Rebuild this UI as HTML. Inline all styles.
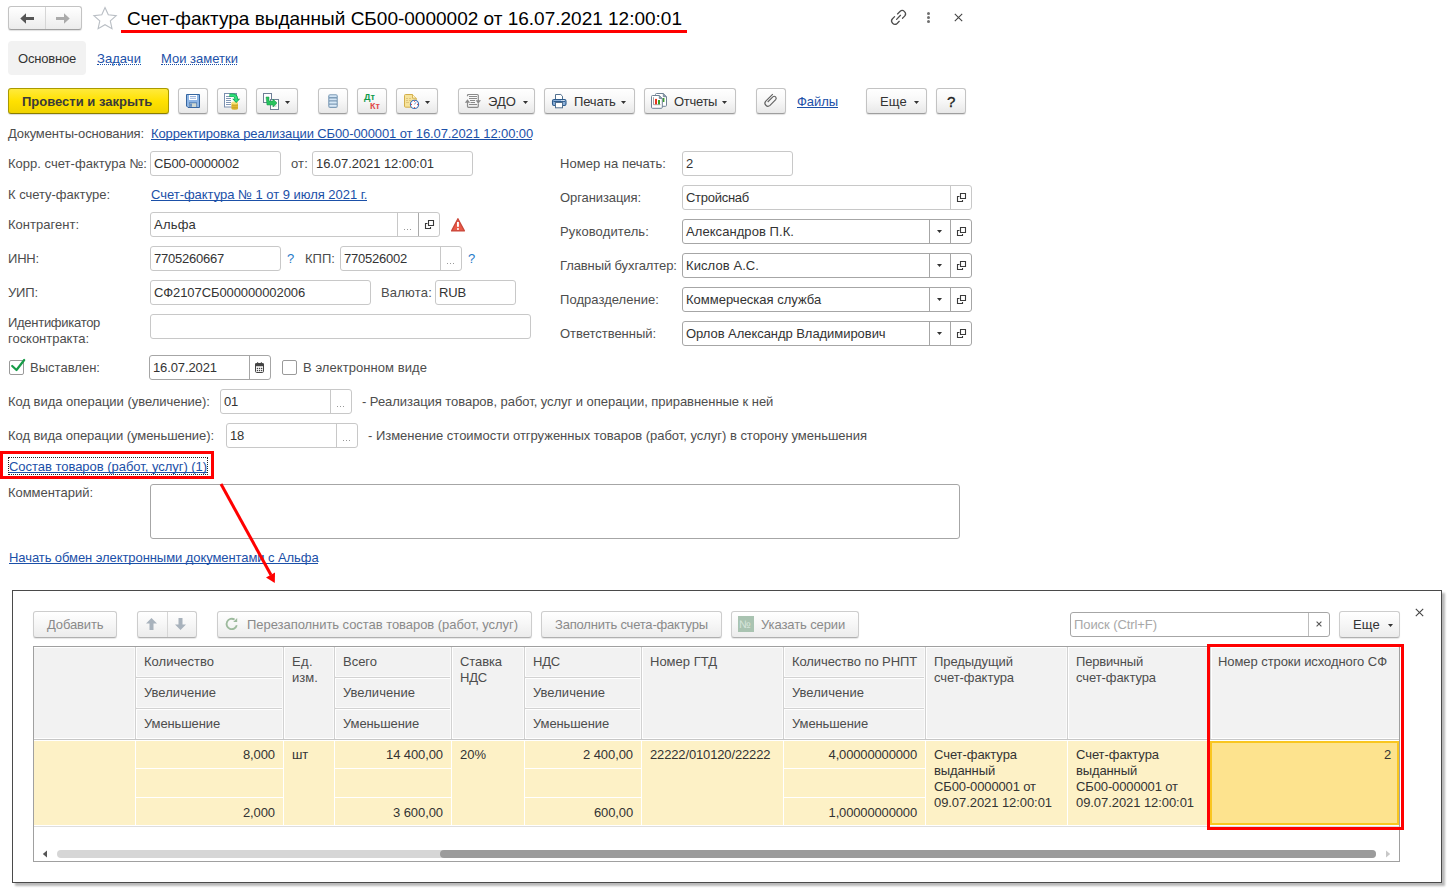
<!DOCTYPE html>
<html><head><meta charset="utf-8"><style>
html,body{margin:0;padding:0;background:#fff;width:1456px;height:892px;overflow:hidden;position:relative}
body{font-family:"Liberation Sans",sans-serif}
.t{position:absolute;white-space:nowrap}
.r{position:absolute}
svg.r{overflow:visible}
</style></head><body>
<div class="r" style="left:8px;top:6px;width:74px;height:24px;border:1px solid #c3c3c3;border-bottom-color:#a0a0a0;border-radius:3px;background:linear-gradient(#fff,#ececec);box-sizing:border-box;box-shadow:0 1px 1px rgba(0,0,0,0.12)"></div>
<div class="r" style="left:45px;top:7px;width:1px;height:22px;background:#d6d6d6"></div>
<svg class="r" style="left:20px;top:13px" width="14" height="11" viewBox="0 0 14 11"><path d="M0.3 5.5L6 0.3V4H14V7H6V10.7z" fill="#555"/></svg>
<svg class="r" style="left:56px;top:13px" width="14" height="11" viewBox="0 0 14 11"><path d="M13.7 5.5L8 0.3V4H0V7H8V10.7z" fill="#aaa"/></svg>
<svg class="r" style="left:92px;top:6px" width="26" height="25" viewBox="0 0 26 25"><path d="M13 1.5l3.3 7.3 7.9.8-5.9 5.3 1.7 7.8L13 18.7l-6.9 4 1.7-7.8-5.9-5.3 7.9-.8z" fill="none" stroke="#b9bec4" stroke-width="1.1"/></svg>
<div class="t" style="left:127px;top:8px;font-size:19px;line-height:21px;color:#000;font-weight:normal;">Счет-фактура выданный СБ00-0000002 от 16.07.2021 12:00:01</div>
<div class="r" style="left:121px;top:30px;width:566px;height:3px;background:#ff0000"></div>
<svg class="r" style="left:886px;top:6px" width="24" height="24" viewBox="0 0 24 24"><g fill="none" stroke="#4d4d4d" stroke-width="1.25" stroke-linecap="round"><path d="M11.5 7.95L13.97 5.47A3.3 3.3 0 0 1 18.63 10.13L16.5 12.25"/><path d="M8.6 10.65L6.47 12.77A3.3 3.3 0 0 0 11.13 17.43L13.25 15.3"/><path d="M10.6 13.4L14.5 9.3"/></g></svg>
<div class="r" style="left:927px;top:11.7px;width:3px;height:3px;border-radius:50%;background:#707070"></div>
<div class="r" style="left:927px;top:15.899999999999999px;width:3px;height:3px;border-radius:50%;background:#707070"></div>
<div class="r" style="left:927px;top:20.1px;width:3px;height:3px;border-radius:50%;background:#707070"></div>
<svg class="r" style="left:954px;top:13px" width="9" height="9" viewBox="0 0 9 9"><path d="M0.8 0.8l7.4 7.4M8.2 0.8l-7.4 7.4" stroke="#444" stroke-width="1.1"/></svg>
<div class="r" style="left:8px;top:41px;width:78px;height:34px;background:#f2f2f2;border-radius:4px"></div>
<div class="t" style="left:18px;top:51px;font-size:13px;line-height:15px;color:#333;font-weight:normal;letter-spacing:-0.195px;">Основное</div>
<div class="t" style="left:97px;top:51px;font-size:13px;line-height:15px;color:#1b50a8;font-weight:normal;letter-spacing:0.057px;">Задачи</div>
<div class="r" style="left:97px;top:64px;width:44px;height:1px;border-top:1px dotted #1b50a8"></div>
<div class="t" style="left:161px;top:51px;font-size:13px;line-height:15px;color:#1b50a8;font-weight:normal;letter-spacing:0.009px;">Мои заметки</div>
<div class="r" style="left:161px;top:64px;width:76px;height:1px;border-top:1px dotted #1b50a8"></div>
<div class="r" style="left:8px;top:88px;width:161px;height:26px;border:1px solid #a99a00;border-bottom-color:#8a7d00;border-radius:3px;background:linear-gradient(#ffea3c,#ffe100 50%,#f0d300);box-sizing:border-box;box-shadow:0 1px 1px rgba(0,0,0,0.15)"></div>
<div class="t" style="left:22px;top:94px;font-size:13px;line-height:15px;color:#3a3a3a;font-weight:bold;">Провести и закрыть</div>
<div class="r" style="left:178px;top:88px;width:30px;height:26px;border:1px solid #c3c3c3;border-bottom-color:#9e9e9e;border-radius:3px;background:linear-gradient(#ffffff,#f7f7f7 50%,#e8e8e8);box-sizing:border-box;box-shadow:0 1px 1px rgba(0,0,0,0.12)"></div>
<div class="r" style="left:217px;top:88px;width:30px;height:26px;border:1px solid #c3c3c3;border-bottom-color:#9e9e9e;border-radius:3px;background:linear-gradient(#ffffff,#f7f7f7 50%,#e8e8e8);box-sizing:border-box;box-shadow:0 1px 1px rgba(0,0,0,0.12)"></div>
<div class="r" style="left:256px;top:88px;width:42px;height:26px;border:1px solid #c3c3c3;border-bottom-color:#9e9e9e;border-radius:3px;background:linear-gradient(#ffffff,#f7f7f7 50%,#e8e8e8);box-sizing:border-box;box-shadow:0 1px 1px rgba(0,0,0,0.12)"></div>
<div class="r" style="left:318px;top:88px;width:30px;height:26px;border:1px solid #c3c3c3;border-bottom-color:#9e9e9e;border-radius:3px;background:linear-gradient(#ffffff,#f7f7f7 50%,#e8e8e8);box-sizing:border-box;box-shadow:0 1px 1px rgba(0,0,0,0.12)"></div>
<div class="r" style="left:357px;top:88px;width:30px;height:26px;border:1px solid #c3c3c3;border-bottom-color:#9e9e9e;border-radius:3px;background:linear-gradient(#ffffff,#f7f7f7 50%,#e8e8e8);box-sizing:border-box;box-shadow:0 1px 1px rgba(0,0,0,0.12)"></div>
<div class="r" style="left:396px;top:88px;width:42px;height:26px;border:1px solid #c3c3c3;border-bottom-color:#9e9e9e;border-radius:3px;background:linear-gradient(#ffffff,#f7f7f7 50%,#e8e8e8);box-sizing:border-box;box-shadow:0 1px 1px rgba(0,0,0,0.12)"></div>
<div class="r" style="left:458px;top:88px;width:77px;height:26px;border:1px solid #c3c3c3;border-bottom-color:#9e9e9e;border-radius:3px;background:linear-gradient(#ffffff,#f7f7f7 50%,#e8e8e8);box-sizing:border-box;box-shadow:0 1px 1px rgba(0,0,0,0.12)"></div>
<div class="r" style="left:544px;top:88px;width:91px;height:26px;border:1px solid #c3c3c3;border-bottom-color:#9e9e9e;border-radius:3px;background:linear-gradient(#ffffff,#f7f7f7 50%,#e8e8e8);box-sizing:border-box;box-shadow:0 1px 1px rgba(0,0,0,0.12)"></div>
<div class="r" style="left:644px;top:88px;width:92px;height:26px;border:1px solid #c3c3c3;border-bottom-color:#9e9e9e;border-radius:3px;background:linear-gradient(#ffffff,#f7f7f7 50%,#e8e8e8);box-sizing:border-box;box-shadow:0 1px 1px rgba(0,0,0,0.12)"></div>
<div class="r" style="left:756px;top:88px;width:30px;height:26px;border:1px solid #c3c3c3;border-bottom-color:#9e9e9e;border-radius:3px;background:linear-gradient(#ffffff,#f7f7f7 50%,#e8e8e8);box-sizing:border-box;box-shadow:0 1px 1px rgba(0,0,0,0.12)"></div>
<div class="r" style="left:866px;top:88px;width:61px;height:26px;border:1px solid #c3c3c3;border-bottom-color:#9e9e9e;border-radius:3px;background:linear-gradient(#ffffff,#f7f7f7 50%,#e8e8e8);box-sizing:border-box;box-shadow:0 1px 1px rgba(0,0,0,0.12)"></div>
<div class="r" style="left:936px;top:88px;width:30px;height:26px;border:1px solid #c3c3c3;border-bottom-color:#9e9e9e;border-radius:3px;background:linear-gradient(#ffffff,#f7f7f7 50%,#e8e8e8);box-sizing:border-box;box-shadow:0 1px 1px rgba(0,0,0,0.12)"></div>
<svg class="r" style="left:186px;top:94px" width="14" height="14" viewBox="0 0 14 14"><path d="M0.5 0.5H13.5V13.5H2L0.5 12z" fill="#8db5e5" stroke="#35659f" stroke-width="1"/><rect x="3" y="1" width="8" height="5" fill="#fff"/><path d="M4 2.5h6M4 4.3h6" stroke="#8aa7d6" stroke-width="0.9"/><rect x="3" y="8.5" width="8" height="5" fill="#3d6aa3"/><rect x="3.6" y="9.2" width="6.8" height="3.8" fill="#cfd8d2"/><rect x="4.2" y="9.6" width="1.6" height="3.2" fill="#4e7fbf"/></svg>
<svg class="r" style="left:223px;top:92px" width="17" height="18" viewBox="0 0 17 18"><rect x="1.5" y="1.5" width="12" height="13.5" fill="#fff" stroke="#7a8fae"/><path d="M3 4.5h5M3 6.5h5M3 8.5h5M3 10.5h5M3 12.5h5" stroke="#8096b5" stroke-width="1"/><rect x="8.5" y="11" width="6.5" height="5.5" fill="#e6c23a"/><ellipse cx="11.75" cy="11" rx="3.25" ry="1.4" fill="#f7e37c"/><ellipse cx="11.75" cy="16.5" rx="3.25" ry="1.2" fill="#d9b02a"/><path d="M8.5 13.3h6.5M8.5 15.2h6.5" stroke="#c49a20" stroke-width="0.7"/><path d="M6.5 3.3H10a3.2 3.2 0 0 1 3.2 3.2V7.5" fill="none" stroke="#0f9a4a" stroke-width="3.6"/><path d="M9.2 6.8H17.2L13.2 11z" fill="#0f9a4a"/><path d="M6.8 3.3H10a3.2 3.2 0 0 1 3.2 3.2V7.8" fill="none" stroke="#2fe07a" stroke-width="2.2"/><path d="M10.6 7.5H15.8L13.2 10z" fill="#2fe07a"/></svg>
<svg class="r" style="left:263px;top:93px" width="17" height="17" viewBox="0 0 17 17"><rect x="0.5" y="0.5" width="8" height="9" fill="#fff" stroke="#6f7f96"/><rect x="7.5" y="6.5" width="8" height="10" fill="#fff" stroke="#6f7f96"/><path d="M9.5 9h4M9.5 11h4M9.5 13h4" stroke="#9aa" stroke-width="0.8"/><path d="M3 4h3v4h4V6l4 4-4 4v-2H4z" fill="#29c35e" stroke="#17934a" stroke-width="0.5"/></svg>
<svg class="r" style="left:285px;top:101px" width="5" height="3" viewBox="0 0 5 3"><path d="M0 0h5l-2.5 3z" fill="#333"/></svg>
<svg class="r" style="left:328px;top:94px" width="10" height="14" viewBox="0 0 10 14"><rect x="0.2" y="0.2" width="9.6" height="13.8" rx="2" fill="#7f9db8"/><rect x="1.3" y="1.2" width="7.4" height="1.9" rx="0.6" fill="#d2e4f4"/><rect x="1.3" y="4.4" width="7.4" height="1.9" rx="0.6" fill="#d2e4f4"/><rect x="1.3" y="7.6" width="7.4" height="1.9" rx="0.6" fill="#d6e8f6"/><rect x="1.3" y="10.8" width="7.4" height="1.9" rx="0.6" fill="#dbeaf7"/></svg>
<div class="t" style="left:364px;top:92px;font-size:9px;line-height:10px;color:#0d9a4a;font-weight:bold">Дт</div>
<div class="t" style="left:370px;top:100.5px;font-size:9px;line-height:10px;color:#e04a4a;font-weight:bold">Кт</div>
<svg class="r" style="left:403px;top:92px" width="18" height="18" viewBox="0 0 18 18"><path d="M1.5 3.5a1 1 0 0 1 1-1H9.5L13.2 6.2V14.2a1 1 0 0 1-1 1H2.5a1 1 0 0 1-1-1z" fill="#f6e39c" stroke="#d2ae4a" stroke-width="1"/><path d="M9.5 2.5V6.2H13.2" fill="#fff6d0" stroke="#d2ae4a" stroke-width="0.9"/><path d="M3 6.5h2M6 6.5h2M3 8.5h2M6 8.5h2M3 10.5h3" stroke="#dcc278" stroke-width="0.9"/><circle cx="11.5" cy="12.4" r="4.1" fill="#fff" stroke="#3b6fb5" stroke-width="1.1"/><path d="M11.5 12.4L13 10.2" stroke="#6f94d0" stroke-width="1"/><circle cx="11.5" cy="9.3" r="0.55" fill="#e53030"/><circle cx="14.6" cy="12.4" r="0.55" fill="#e53030"/><circle cx="11.5" cy="15.5" r="0.55" fill="#e53030"/><circle cx="8.4" cy="12.4" r="0.55" fill="#e53030"/></svg>
<svg class="r" style="left:425px;top:101px" width="5" height="3" viewBox="0 0 5 3"><path d="M0 0h5l-2.5 3z" fill="#333"/></svg>
<svg class="r" style="left:464px;top:93px" width="18" height="16" viewBox="0 0 18 16"><g fill="none" stroke="#8a8a8a" stroke-width="1.2"><path d="M3.5 3.2V2.5a1 1 0 0 1 1-1H13.3a1 1 0 0 1 1 1V8.5"/><path d="M14.3 10.5V13.3a1 1 0 0 1-1 1H4.5a1 1 0 0 1-1-1V8"/><path d="M5 3.5h8M5 5.5h8M6 7.5h5M6.5 9.5h4.5M5 11.5h8"/></g><path d="M0.8 9.8L3.5 6.2L6.2 9.8z" fill="#8a8a8a"/><path d="M11.6 7.2H17L14.3 10.8z" fill="#8a8a8a"/></svg>
<div class="t" style="left:488px;top:94px;font-size:13px;line-height:15px;color:#333;font-weight:normal;letter-spacing:0.062px;">ЭДО</div>
<svg class="r" style="left:523px;top:101px" width="5" height="3" viewBox="0 0 5 3"><path d="M0 0h5l-2.5 3z" fill="#333"/></svg>
<svg class="r" style="left:551px;top:93px" width="16" height="16" viewBox="0 0 16 16"><path d="M4.5 1.5H9.8L11.5 3.2V6.5H4.5z" fill="#fff" stroke="#52708f" stroke-width="1"/><rect x="1.5" y="6.5" width="13.5" height="6" rx="1.6" fill="#8db1da" stroke="#2d5b8c" stroke-width="1.1"/><path d="M2.5 8.5H14" stroke="#2d5b8c" stroke-width="1"/><rect x="10.4" y="7.1" width="1.1" height="1" fill="#fff"/><rect x="12.3" y="7.1" width="1.1" height="1" fill="#fff"/><rect x="4.5" y="9.5" width="7" height="5.3" fill="#fff" stroke="#52708f" stroke-width="1"/></svg>
<div class="t" style="left:574px;top:94px;font-size:13px;line-height:15px;color:#333;font-weight:normal;letter-spacing:-0.17px;">Печать</div>
<svg class="r" style="left:621px;top:101px" width="5" height="3" viewBox="0 0 5 3"><path d="M0 0h5l-2.5 3z" fill="#333"/></svg>
<svg class="r" style="left:650px;top:92px" width="18" height="18" viewBox="0 0 18 18"><path d="M5.5 2.5a1 1 0 0 1 1-1H13.3L16.5 4.7V13.3a1 1 0 0 1-1 1H6.5a1 1 0 0 1-1-1z" fill="#fff" stroke="#6f8294" stroke-width="1"/><path d="M13.3 1.5V4.7H16.5" fill="#8a9aaa" stroke="#6f8294" stroke-width="0.8"/><rect x="12.6" y="6" width="1.8" height="4" fill="#3aa02a"/><path d="M1.5 4.5a1 1 0 0 1 1-1H9.3L12.3 6.5V15.3a1 1 0 0 1-1 1H2.5a1 1 0 0 1-1-1z" fill="#fff" stroke="#6f8294" stroke-width="1"/><path d="M9.3 3.5V6.5H12.3" fill="#8a9aaa" stroke="#6f8294" stroke-width="0.8"/><path d="M3.5 5.2V12.7H10.5" fill="none" stroke="#8c8c8c" stroke-width="0.8"/><rect x="5" y="6.9" width="2" height="5.4" fill="#e8341c"/><rect x="8" y="8" width="2" height="4.3" fill="#3aa02a"/></svg>
<div class="t" style="left:674px;top:94px;font-size:13px;line-height:15px;color:#333;font-weight:normal;letter-spacing:-0.3px;">Отчеты</div>
<svg class="r" style="left:722px;top:101px" width="5" height="3" viewBox="0 0 5 3"><path d="M0 0h5l-2.5 3z" fill="#333"/></svg>
<svg class="r" style="left:762px;top:92px" width="17" height="17" viewBox="0 0 17 17"><path d="M10.8 2.06L3.78 9.08A3 3 0 0 0 8.02 13.32L13.68 7.66A2 2 0 0 0 10.86 4.84L5.7 10.0" fill="none" stroke="#626262" stroke-width="1.15"/></svg>
<div class="t" style="left:797px;top:94px;font-size:13px;line-height:15px;color:#1b50a8;font-weight:normal;letter-spacing:-0.062px;">Файлы</div>
<div class="r" style="left:797px;top:107px;width:41px;height:1px;background:#1b50a8"></div>
<div class="t" style="left:880px;top:94px;font-size:13px;line-height:15px;color:#333;font-weight:normal;letter-spacing:0.177px;">Еще</div>
<svg class="r" style="left:914px;top:101px" width="5" height="3" viewBox="0 0 5 3"><path d="M0 0h5l-2.5 3z" fill="#333"/></svg>
<div class="t" style="left:947px;top:93px;font-size:15px;line-height:17px;color:#222;font-weight:normal;-webkit-text-stroke:0.35px #222;">?</div>
<div class="t" style="left:8px;top:126px;font-size:13px;line-height:15px;color:#4d4d4d;font-weight:normal;letter-spacing:-0.128px;">Документы-основания:</div>
<div class="t" style="left:151px;top:126px;font-size:13px;line-height:15px;color:#1b50a8;font-weight:normal;letter-spacing:-0.11px;">Корректировка реализации СБ00-000001 от 16.07.2021 12:00:00</div>
<div class="r" style="left:151px;top:139px;width:381px;height:1px;background:#1b50a8"></div>
<div class="t" style="left:8px;top:156px;font-size:13px;line-height:15px;color:#4d4d4d;font-weight:normal;letter-spacing:0.021px;">Корр. счет-фактура №:</div>
<div class="r" style="left:150px;top:151px;width:131px;height:25px;border:1px solid #c8c8c8;border-radius:3px;background:#fff;box-sizing:border-box"></div>
<div class="t" style="left:154px;top:156px;font-size:13px;line-height:15px;color:#333;font-weight:normal;letter-spacing:-0.197px;">СБ00-0000002</div>
<div class="t" style="left:291px;top:156px;font-size:13px;line-height:15px;color:#4d4d4d;font-weight:normal;letter-spacing:0.161px;">от:</div>
<div class="r" style="left:312px;top:151px;width:161px;height:25px;border:1px solid #c8c8c8;border-radius:3px;background:#fff;box-sizing:border-box"></div>
<div class="t" style="left:316px;top:156px;font-size:13px;line-height:15px;color:#333;font-weight:normal;letter-spacing:-0.07px;">16.07.2021 12:00:01</div>
<div class="t" style="left:560px;top:156px;font-size:13px;line-height:15px;color:#4d4d4d;font-weight:normal;letter-spacing:0.028px;">Номер на печать:</div>
<div class="r" style="left:682px;top:151px;width:111px;height:25px;border:1px solid #c8c8c8;border-radius:3px;background:#fff;box-sizing:border-box"></div>
<div class="t" style="left:686px;top:156px;font-size:13px;line-height:15px;color:#333;font-weight:normal;">2</div>
<div class="t" style="left:8px;top:187px;font-size:13px;line-height:15px;color:#4d4d4d;font-weight:normal;letter-spacing:-0.021px;">К счету-фактуре:</div>
<div class="t" style="left:151px;top:187px;font-size:13px;line-height:15px;color:#1b50a8;font-weight:normal;letter-spacing:-0.03px;">Счет-фактура № 1 от 9 июля 2021 г.</div>
<div class="r" style="left:151px;top:200px;width:216px;height:1px;background:#1b50a8"></div>
<div class="t" style="left:560px;top:190px;font-size:13px;line-height:15px;color:#4d4d4d;font-weight:normal;letter-spacing:-0.086px;">Организация:</div>
<div class="r" style="left:682px;top:185px;width:290px;height:25px;border:1px solid #c8c8c8;border-radius:3px;background:#fff;box-sizing:border-box"></div>
<div class="r" style="left:950px;top:186px;width:1px;height:23px;background:#c8c8c8"></div>
<div class="t" style="left:686px;top:190px;font-size:13px;line-height:15px;color:#333;font-weight:normal;letter-spacing:-0.271px;">Стройснаб</div>
<svg class="r" style="left:957px;top:192px" width="10" height="11" viewBox="0 0 10 11"><path d="M3.5 1.5h5v5h-5z" fill="none" stroke="#3a3a3a" stroke-width="1.1"/><path d="M2.5 4.5H0.5V9.5H5.5V8" fill="none" stroke="#3a3a3a" stroke-width="1.1"/></svg>
<div class="t" style="left:8px;top:217px;font-size:13px;line-height:15px;color:#4d4d4d;font-weight:normal;letter-spacing:0.016px;">Контрагент:</div>
<div class="r" style="left:150px;top:212px;width:290px;height:25px;border:1px solid #c8c8c8;border-radius:3px;background:#fff;box-sizing:border-box"></div>
<div class="r" style="left:397px;top:213px;width:1px;height:23px;background:#c8c8c8"></div>
<div class="t" style="left:154px;top:217px;font-size:13px;line-height:15px;color:#333;font-weight:normal;letter-spacing:0.209px;">Альфа</div>
<div class="r" style="left:418px;top:213px;width:1px;height:23px;background:#aaaaaa"></div>
<div class="r" style="left:404px;top:229px;width:1px;height:1px;background:#999"></div>
<div class="r" style="left:407px;top:229px;width:1px;height:1px;background:#999"></div>
<div class="r" style="left:410px;top:229px;width:1px;height:1px;background:#999"></div>
<svg class="r" style="left:425px;top:219px" width="10" height="11" viewBox="0 0 10 11"><path d="M3.5 1.5h5v5h-5z" fill="none" stroke="#3a3a3a" stroke-width="1.1"/><path d="M2.5 4.5H0.5V9.5H5.5V8" fill="none" stroke="#3a3a3a" stroke-width="1.1"/></svg>
<svg class="r" style="left:450px;top:217px" width="16" height="16" viewBox="0 0 16 16"><path d="M7.9 1.7L14.4 13.9H1.6z" fill="#ea5a48" stroke="#c9473a" stroke-width="1.3" stroke-linejoin="round"/><rect x="7" y="5" width="1.9" height="4.8" fill="#fff"/><rect x="7" y="11.2" width="1.9" height="1.6" fill="#fff"/></svg>
<div class="t" style="left:560px;top:224px;font-size:13px;line-height:15px;color:#4d4d4d;font-weight:normal;letter-spacing:0.126px;">Руководитель:</div>
<div class="r" style="left:682px;top:219px;width:290px;height:25px;border:1px solid #a6a6a6;border-radius:3px;background:#fff;box-sizing:border-box"></div>
<div class="r" style="left:929px;top:220px;width:1px;height:23px;background:#a6a6a6"></div>
<div class="r" style="left:950px;top:220px;width:1px;height:23px;background:#a6a6a6"></div>
<div class="t" style="left:686px;top:224px;font-size:13px;line-height:15px;color:#333;font-weight:normal;letter-spacing:0.067px;">Александров П.К.</div>
<svg class="r" style="left:937px;top:230px" width="5" height="3" viewBox="0 0 5 3"><path d="M0 0h5l-2.5 3z" fill="#333"/></svg>
<svg class="r" style="left:957px;top:226px" width="10" height="11" viewBox="0 0 10 11"><path d="M3.5 1.5h5v5h-5z" fill="none" stroke="#3a3a3a" stroke-width="1.1"/><path d="M2.5 4.5H0.5V9.5H5.5V8" fill="none" stroke="#3a3a3a" stroke-width="1.1"/></svg>
<div class="t" style="left:8px;top:251px;font-size:13px;line-height:15px;color:#4d4d4d;font-weight:normal;letter-spacing:-0.184px;">ИНН:</div>
<div class="r" style="left:150px;top:246px;width:131px;height:25px;border:1px solid #c8c8c8;border-radius:3px;background:#fff;box-sizing:border-box"></div>
<div class="t" style="left:154px;top:251px;font-size:13px;line-height:15px;color:#333;font-weight:normal;letter-spacing:-0.234px;">7705260667</div>
<div class="t" style="left:287px;top:251px;font-size:13px;line-height:15px;color:#1f7ac8;font-weight:normal;">?</div>
<div class="t" style="left:305px;top:251px;font-size:13px;line-height:15px;color:#4d4d4d;font-weight:normal;letter-spacing:0.031px;">КПП:</div>
<div class="r" style="left:340px;top:246px;width:122px;height:25px;border:1px solid #c8c8c8;border-radius:3px;background:#fff;box-sizing:border-box"></div>
<div class="r" style="left:440px;top:247px;width:1px;height:23px;background:#c8c8c8"></div>
<div class="t" style="left:344px;top:251px;font-size:13px;line-height:15px;color:#333;font-weight:normal;letter-spacing:-0.234px;">770526002</div>
<div class="r" style="left:447px;top:263px;width:1px;height:1px;background:#999"></div>
<div class="r" style="left:450px;top:263px;width:1px;height:1px;background:#999"></div>
<div class="r" style="left:453px;top:263px;width:1px;height:1px;background:#999"></div>
<div class="t" style="left:468px;top:251px;font-size:13px;line-height:15px;color:#1f7ac8;font-weight:normal;">?</div>
<div class="t" style="left:560px;top:258px;font-size:13px;line-height:15px;color:#4d4d4d;font-weight:normal;letter-spacing:-0.11px;">Главный бухгалтер:</div>
<div class="r" style="left:682px;top:253px;width:290px;height:25px;border:1px solid #a6a6a6;border-radius:3px;background:#fff;box-sizing:border-box"></div>
<div class="r" style="left:929px;top:254px;width:1px;height:23px;background:#a6a6a6"></div>
<div class="r" style="left:950px;top:254px;width:1px;height:23px;background:#a6a6a6"></div>
<div class="t" style="left:686px;top:258px;font-size:13px;line-height:15px;color:#333;font-weight:normal;letter-spacing:0.082px;">Кислов А.С.</div>
<svg class="r" style="left:937px;top:264px" width="5" height="3" viewBox="0 0 5 3"><path d="M0 0h5l-2.5 3z" fill="#333"/></svg>
<svg class="r" style="left:957px;top:260px" width="10" height="11" viewBox="0 0 10 11"><path d="M3.5 1.5h5v5h-5z" fill="none" stroke="#3a3a3a" stroke-width="1.1"/><path d="M2.5 4.5H0.5V9.5H5.5V8" fill="none" stroke="#3a3a3a" stroke-width="1.1"/></svg>
<div class="t" style="left:8px;top:285px;font-size:13px;line-height:15px;color:#4d4d4d;font-weight:normal;letter-spacing:-0.141px;">УИП:</div>
<div class="r" style="left:150px;top:280px;width:221px;height:25px;border:1px solid #c8c8c8;border-radius:3px;background:#fff;box-sizing:border-box"></div>
<div class="t" style="left:154px;top:285px;font-size:13px;line-height:15px;color:#333;font-weight:normal;letter-spacing:-0.09px;">СФ2107СБ000000002006</div>
<div class="t" style="left:381px;top:285px;font-size:13px;line-height:15px;color:#4d4d4d;font-weight:normal;letter-spacing:0.199px;">Валюта:</div>
<div class="r" style="left:435px;top:280px;width:81px;height:25px;border:1px solid #c8c8c8;border-radius:3px;background:#fff;box-sizing:border-box"></div>
<div class="t" style="left:439px;top:285px;font-size:13px;line-height:15px;color:#333;font-weight:normal;letter-spacing:-0.151px;">RUB</div>
<div class="t" style="left:560px;top:292px;font-size:13px;line-height:15px;color:#4d4d4d;font-weight:normal;letter-spacing:0.047px;">Подразделение:</div>
<div class="r" style="left:682px;top:287px;width:290px;height:25px;border:1px solid #a6a6a6;border-radius:3px;background:#fff;box-sizing:border-box"></div>
<div class="r" style="left:929px;top:288px;width:1px;height:23px;background:#a6a6a6"></div>
<div class="r" style="left:950px;top:288px;width:1px;height:23px;background:#a6a6a6"></div>
<div class="t" style="left:686px;top:292px;font-size:13px;line-height:15px;color:#333;font-weight:normal;">Коммерческая служба</div>
<svg class="r" style="left:937px;top:298px" width="5" height="3" viewBox="0 0 5 3"><path d="M0 0h5l-2.5 3z" fill="#333"/></svg>
<svg class="r" style="left:957px;top:294px" width="10" height="11" viewBox="0 0 10 11"><path d="M3.5 1.5h5v5h-5z" fill="none" stroke="#3a3a3a" stroke-width="1.1"/><path d="M2.5 4.5H0.5V9.5H5.5V8" fill="none" stroke="#3a3a3a" stroke-width="1.1"/></svg>
<div class="t" style="left:8px;top:315px;font-size:13px;line-height:15px;color:#4d4d4d;font-weight:normal;letter-spacing:-0.28px;">Идентификатор</div>
<div class="t" style="left:8px;top:331px;font-size:13px;line-height:15px;color:#4d4d4d;font-weight:normal;letter-spacing:-0.025px;">госконтракта:</div>
<div class="r" style="left:150px;top:314px;width:381px;height:25px;border:1px solid #c8c8c8;border-radius:3px;background:#fff;box-sizing:border-box"></div>
<div class="t" style="left:560px;top:326px;font-size:13px;line-height:15px;color:#4d4d4d;font-weight:normal;letter-spacing:-0.032px;">Ответственный:</div>
<div class="r" style="left:682px;top:321px;width:290px;height:25px;border:1px solid #a6a6a6;border-radius:3px;background:#fff;box-sizing:border-box"></div>
<div class="r" style="left:929px;top:322px;width:1px;height:23px;background:#a6a6a6"></div>
<div class="r" style="left:950px;top:322px;width:1px;height:23px;background:#a6a6a6"></div>
<div class="t" style="left:686px;top:326px;font-size:13px;line-height:15px;color:#333;font-weight:normal;letter-spacing:-0.05px;">Орлов Александр Владимирович</div>
<svg class="r" style="left:937px;top:332px" width="5" height="3" viewBox="0 0 5 3"><path d="M0 0h5l-2.5 3z" fill="#333"/></svg>
<svg class="r" style="left:957px;top:328px" width="10" height="11" viewBox="0 0 10 11"><path d="M3.5 1.5h5v5h-5z" fill="none" stroke="#3a3a3a" stroke-width="1.1"/><path d="M2.5 4.5H0.5V9.5H5.5V8" fill="none" stroke="#3a3a3a" stroke-width="1.1"/></svg>
<div class="r" style="left:9px;top:360px;width:15px;height:15px;border:1px solid #9a9a9a;border-radius:2px;background:#fff;box-sizing:border-box"></div>
<svg class="r" style="left:10px;top:358px" width="16" height="14" viewBox="0 0 16 14"><path d="M2.2 8L6.5 12L14.2 2" fill="none" stroke="#179c48" stroke-width="2.2" stroke-linecap="round" stroke-linejoin="round"/></svg>
<div class="t" style="left:30px;top:360px;font-size:13px;line-height:15px;color:#4d4d4d;font-weight:normal;letter-spacing:0.023px;">Выставлен:</div>
<div class="r" style="left:149px;top:355px;width:122px;height:25px;border:1px solid #a6a6a6;border-radius:3px;background:#fff;box-sizing:border-box"></div>
<div class="r" style="left:249px;top:356px;width:1px;height:23px;background:#a6a6a6"></div>
<div class="t" style="left:153px;top:360px;font-size:13px;line-height:15px;color:#333;font-weight:normal;letter-spacing:-0.109px;">16.07.2021</div>
<svg class="r" style="left:255px;top:362px" width="9" height="11" viewBox="0 0 9 11"><rect x="0.5" y="1.5" width="8" height="9" rx="1.2" fill="#fff" stroke="#444" stroke-width="1"/><rect x="0" y="1.2" width="9" height="3" rx="1" fill="#444"/><rect x="2" y="0.3" width="1.2" height="1.5" fill="#444"/><rect x="5.8" y="0.3" width="1.2" height="1.5" fill="#444"/><rect x="1.8" y="5.8" width="1.3" height="1.3" fill="#444"/><rect x="3.9" y="5.8" width="1.3" height="1.3" fill="#444"/><rect x="6" y="5.8" width="1.3" height="1.3" fill="#444"/><rect x="1.8" y="7.9" width="1.3" height="1.3" fill="#444"/><rect x="3.9" y="7.9" width="1.3" height="1.3" fill="#444"/><rect x="6" y="7.9" width="1.3" height="1.3" fill="#444"/></svg>
<div class="r" style="left:282px;top:360px;width:15px;height:15px;border:1px solid #9a9a9a;border-radius:2px;background:#fff;box-sizing:border-box"></div>
<div class="t" style="left:303px;top:360px;font-size:13px;line-height:15px;color:#4d4d4d;font-weight:normal;letter-spacing:0.066px;">В электронном виде</div>
<div class="t" style="left:8px;top:394px;font-size:13px;line-height:15px;color:#4d4d4d;font-weight:normal;letter-spacing:-0.024px;">Код вида операции (увеличение):</div>
<div class="r" style="left:220px;top:389px;width:132px;height:25px;border:1px solid #c8c8c8;border-radius:3px;background:#fff;box-sizing:border-box"></div>
<div class="r" style="left:330px;top:390px;width:1px;height:23px;background:#c8c8c8"></div>
<div class="t" style="left:224px;top:394px;font-size:13px;line-height:15px;color:#333;font-weight:normal;letter-spacing:-0.234px;">01</div>
<div class="r" style="left:337px;top:406px;width:1px;height:1px;background:#999"></div>
<div class="r" style="left:340px;top:406px;width:1px;height:1px;background:#999"></div>
<div class="r" style="left:343px;top:406px;width:1px;height:1px;background:#999"></div>
<div class="t" style="left:362px;top:394px;font-size:13px;line-height:15px;color:#4d4d4d;font-weight:normal;letter-spacing:-0.045px;">- Реализация товаров, работ, услуг и операции, приравненные к ней</div>
<div class="t" style="left:8px;top:428px;font-size:13px;line-height:15px;color:#4d4d4d;font-weight:normal;letter-spacing:-0.063px;">Код вида операции (уменьшение):</div>
<div class="r" style="left:226px;top:423px;width:132px;height:25px;border:1px solid #c8c8c8;border-radius:3px;background:#fff;box-sizing:border-box"></div>
<div class="r" style="left:336px;top:424px;width:1px;height:23px;background:#c8c8c8"></div>
<div class="t" style="left:230px;top:428px;font-size:13px;line-height:15px;color:#333;font-weight:normal;letter-spacing:-0.234px;">18</div>
<div class="r" style="left:343px;top:440px;width:1px;height:1px;background:#999"></div>
<div class="r" style="left:346px;top:440px;width:1px;height:1px;background:#999"></div>
<div class="r" style="left:349px;top:440px;width:1px;height:1px;background:#999"></div>
<div class="t" style="left:368px;top:428px;font-size:13px;line-height:15px;color:#4d4d4d;font-weight:normal;letter-spacing:-0.02px;">- Изменение стоимости отгруженных товаров (работ, услуг) в сторону уменьшения</div>
<div class="r" style="left:0px;top:451px;width:214px;height:28px;border:3px solid #ff0000;box-sizing:border-box"></div>
<div class="r" style="left:8px;top:457px;width:200px;height:18px;border:1px dotted #222;box-sizing:border-box"></div>
<div class="t" style="left:9px;top:459px;font-size:13px;line-height:15px;color:#1b50a8;font-weight:normal;letter-spacing:-0.03px;">Состав товаров (работ, услуг) (1)</div>
<div class="r" style="left:9px;top:472px;width:198px;height:1px;background:#1b50a8"></div>
<div class="t" style="left:8px;top:485px;font-size:13px;line-height:15px;color:#4d4d4d;font-weight:normal;letter-spacing:-0.043px;">Комментарий:</div>
<div class="r" style="left:150px;top:484px;width:810px;height:55px;border:1px solid #a6a6a6;border-radius:3px;background:#fff;box-sizing:border-box"></div>
<div class="t" style="left:9px;top:550px;font-size:13px;line-height:15px;color:#1b50a8;font-weight:normal;letter-spacing:-0.075px;">Начать обмен электронными документами с Альфа</div>
<div class="r" style="left:9px;top:563px;width:309px;height:1px;background:#1b50a8"></div>
<div class="r" style="left:12px;top:590px;width:1430px;height:293px;border:1px solid #4a4a4a;background:#fff;box-sizing:border-box;box-shadow:3px 3px 2px rgba(0,0,0,0.28)"></div>
<svg class="r" style="left:1415px;top:608px" width="9" height="9" viewBox="0 0 9 9"><path d="M0.8 0.8l7.4 7.4M8.2 0.8l-7.4 7.4" stroke="#444" stroke-width="1.1"/></svg>
<div class="r" style="left:33px;top:611px;width:84px;height:27px;border:1px solid #cdcdcd;border-bottom-color:#b0b0b0;border-radius:3px;background:linear-gradient(#ffffff,#f6f6f6 50%,#ececec);box-sizing:border-box;box-shadow:0 1px 1px rgba(0,0,0,0.10)"></div>
<div class="t" style="left:47px;top:617px;font-size:13px;line-height:15px;color:#8a8a8a;font-weight:normal;letter-spacing:-0.14px;">Добавить</div>
<div class="r" style="left:137px;top:611px;width:60px;height:27px;border:1px solid #cdcdcd;border-bottom-color:#b0b0b0;border-radius:3px;background:linear-gradient(#ffffff,#f6f6f6 50%,#ececec);box-sizing:border-box;box-shadow:0 1px 1px rgba(0,0,0,0.10)"></div>
<div class="r" style="left:167px;top:612px;width:1px;height:25px;background:#d6d6d6"></div>
<svg class="r" style="left:145px;top:617px" width="13" height="14" viewBox="0 0 13 14"><path d="M6.5 1L12 6.5H8.5V13h-4V6.5H1z" fill="#a8b2bc"/></svg>
<svg class="r" style="left:174px;top:617px" width="13" height="14" viewBox="0 0 13 14"><path d="M6.5 13L12 7.5H8.5V1h-4v6.5H1z" fill="#a8b2bc"/></svg>
<div class="r" style="left:217px;top:611px;width:315px;height:27px;border:1px solid #cdcdcd;border-bottom-color:#b0b0b0;border-radius:3px;background:linear-gradient(#ffffff,#f6f6f6 50%,#ececec);box-sizing:border-box;box-shadow:0 1px 1px rgba(0,0,0,0.10)"></div>
<svg class="r" style="left:225px;top:617px" width="14" height="14" viewBox="0 0 14 14"><path d="M11.8 8.35A5.2 5.2 0 1 1 9.6 2.6" fill="none" stroke="#9dba9d" stroke-width="1.8"/><path d="M12.2 1.1V5H8.2z" fill="#9dba9d"/></svg>
<div class="t" style="left:247px;top:617px;font-size:13px;line-height:15px;color:#8a8a8a;font-weight:normal;letter-spacing:-0.05px;">Перезаполнить состав товаров (работ, услуг)</div>
<div class="r" style="left:541px;top:611px;width:181px;height:27px;border:1px solid #cdcdcd;border-bottom-color:#b0b0b0;border-radius:3px;background:linear-gradient(#ffffff,#f6f6f6 50%,#ececec);box-sizing:border-box;box-shadow:0 1px 1px rgba(0,0,0,0.10)"></div>
<div class="t" style="left:555px;top:617px;font-size:13px;line-height:15px;color:#8a8a8a;font-weight:normal;letter-spacing:-0.2px;">Заполнить счета-фактуры</div>
<div class="r" style="left:731px;top:611px;width:128px;height:27px;border:1px solid #cdcdcd;border-bottom-color:#b0b0b0;border-radius:3px;background:linear-gradient(#ffffff,#f6f6f6 50%,#ececec);box-sizing:border-box;box-shadow:0 1px 1px rgba(0,0,0,0.10)"></div>
<div class="r" style="left:738px;top:616px;width:16px;height:16px;background:#a9c3b1"></div>
<div class="t" style="left:739px;top:617px;font-size:11px;line-height:14px;color:#d8e6dc">№</div>
<div class="t" style="left:761px;top:617px;font-size:13px;line-height:15px;color:#8a8a8a;font-weight:normal;letter-spacing:-0.1px;">Указать серии</div>
<div class="r" style="left:1070px;top:612px;width:260px;height:25px;border:1px solid #a6a6a6;border-radius:3px;background:#fff;box-sizing:border-box"></div>
<div class="r" style="left:1308px;top:613px;width:1px;height:23px;background:#bdbdbd"></div>
<div class="t" style="left:1074px;top:617px;font-size:13px;line-height:15px;color:#a8a8a8;font-weight:normal;letter-spacing:-0.075px;">Поиск (Ctrl+F)</div>
<svg class="r" style="left:1316px;top:621px" width="6" height="6" viewBox="0 0 6 6"><path d="M0.6 0.6l4.8 4.8M5.4 0.6l-4.8 4.8" stroke="#555" stroke-width="1.1"/></svg>
<div class="r" style="left:1339px;top:611px;width:61px;height:27px;border:1px solid #cdcdcd;border-bottom-color:#b0b0b0;border-radius:3px;background:linear-gradient(#ffffff,#f6f6f6 50%,#ececec);box-sizing:border-box;box-shadow:0 1px 1px rgba(0,0,0,0.10)"></div>
<div class="t" style="left:1353px;top:617px;font-size:13px;line-height:15px;color:#333;font-weight:normal;letter-spacing:0.177px;">Еще</div>
<svg class="r" style="left:1388px;top:624px" width="5" height="3" viewBox="0 0 5 3"><path d="M0 0h5l-2.5 3z" fill="#333"/></svg>
<div class="r" style="left:33px;top:646px;width:1367px;height:216px;border:1px solid #a0a0a0;background:#fff;box-sizing:border-box"></div>
<div class="r" style="left:34px;top:647px;width:1365px;height:92px;background:#f2f2f2"></div>
<div class="r" style="left:34px;top:738px;width:1365px;height:1px;background:#ffffff"></div>
<div class="r" style="left:34px;top:739px;width:1365px;height:1px;background:#c6c6c6"></div>
<div class="r" style="left:34px;top:740px;width:1365px;height:1px;background:#ffffff"></div>
<div class="r" style="left:34px;top:741px;width:1365px;height:84px;background:#fdf1c6"></div>
<div class="r" style="left:34px;top:825px;width:1365px;height:1px;background:#ffffff"></div>
<div class="r" style="left:34px;top:826px;width:1365px;height:1px;background:#dedede"></div>
<div class="r" style="left:34px;top:647px;width:100px;height:1px;background:#ffffff"></div>
<div class="r" style="left:135px;top:647px;width:1px;height:92px;background:#d2d2d2"></div>
<div class="r" style="left:136px;top:647px;width:1px;height:91px;background:#ffffff"></div>
<div class="r" style="left:134px;top:647px;width:1px;height:91px;background:#fafafa"></div>
<div class="r" style="left:135px;top:741px;width:1px;height:84px;background:#ffffff"></div>
<div class="r" style="left:136px;top:647px;width:146px;height:1px;background:#ffffff"></div>
<div class="r" style="left:136px;top:676px;width:146px;height:1px;background:#fafafa"></div>
<div class="r" style="left:136px;top:677px;width:146px;height:1px;background:#d2d2d2"></div>
<div class="r" style="left:136px;top:678px;width:146px;height:1px;background:#ffffff"></div>
<div class="r" style="left:136px;top:707px;width:146px;height:1px;background:#fafafa"></div>
<div class="r" style="left:136px;top:708px;width:146px;height:1px;background:#d2d2d2"></div>
<div class="r" style="left:136px;top:709px;width:146px;height:1px;background:#ffffff"></div>
<div class="r" style="left:136px;top:768px;width:147px;height:1px;background:#ffffff"></div>
<div class="r" style="left:136px;top:797px;width:147px;height:1px;background:#ffffff"></div>
<div class="r" style="left:283px;top:647px;width:1px;height:92px;background:#d2d2d2"></div>
<div class="r" style="left:284px;top:647px;width:1px;height:91px;background:#ffffff"></div>
<div class="r" style="left:282px;top:647px;width:1px;height:91px;background:#fafafa"></div>
<div class="r" style="left:283px;top:741px;width:1px;height:84px;background:#ffffff"></div>
<div class="r" style="left:284px;top:647px;width:49px;height:1px;background:#ffffff"></div>
<div class="r" style="left:334px;top:647px;width:1px;height:92px;background:#d2d2d2"></div>
<div class="r" style="left:335px;top:647px;width:1px;height:91px;background:#ffffff"></div>
<div class="r" style="left:333px;top:647px;width:1px;height:91px;background:#fafafa"></div>
<div class="r" style="left:334px;top:741px;width:1px;height:84px;background:#ffffff"></div>
<div class="r" style="left:335px;top:647px;width:115px;height:1px;background:#ffffff"></div>
<div class="r" style="left:335px;top:676px;width:115px;height:1px;background:#fafafa"></div>
<div class="r" style="left:335px;top:677px;width:115px;height:1px;background:#d2d2d2"></div>
<div class="r" style="left:335px;top:678px;width:115px;height:1px;background:#ffffff"></div>
<div class="r" style="left:335px;top:707px;width:115px;height:1px;background:#fafafa"></div>
<div class="r" style="left:335px;top:708px;width:115px;height:1px;background:#d2d2d2"></div>
<div class="r" style="left:335px;top:709px;width:115px;height:1px;background:#ffffff"></div>
<div class="r" style="left:335px;top:768px;width:116px;height:1px;background:#ffffff"></div>
<div class="r" style="left:335px;top:797px;width:116px;height:1px;background:#ffffff"></div>
<div class="r" style="left:451px;top:647px;width:1px;height:92px;background:#d2d2d2"></div>
<div class="r" style="left:452px;top:647px;width:1px;height:91px;background:#ffffff"></div>
<div class="r" style="left:450px;top:647px;width:1px;height:91px;background:#fafafa"></div>
<div class="r" style="left:451px;top:741px;width:1px;height:84px;background:#ffffff"></div>
<div class="r" style="left:452px;top:647px;width:71px;height:1px;background:#ffffff"></div>
<div class="r" style="left:524px;top:647px;width:1px;height:92px;background:#d2d2d2"></div>
<div class="r" style="left:525px;top:647px;width:1px;height:91px;background:#ffffff"></div>
<div class="r" style="left:523px;top:647px;width:1px;height:91px;background:#fafafa"></div>
<div class="r" style="left:524px;top:741px;width:1px;height:84px;background:#ffffff"></div>
<div class="r" style="left:525px;top:647px;width:115px;height:1px;background:#ffffff"></div>
<div class="r" style="left:525px;top:676px;width:115px;height:1px;background:#fafafa"></div>
<div class="r" style="left:525px;top:677px;width:115px;height:1px;background:#d2d2d2"></div>
<div class="r" style="left:525px;top:678px;width:115px;height:1px;background:#ffffff"></div>
<div class="r" style="left:525px;top:707px;width:115px;height:1px;background:#fafafa"></div>
<div class="r" style="left:525px;top:708px;width:115px;height:1px;background:#d2d2d2"></div>
<div class="r" style="left:525px;top:709px;width:115px;height:1px;background:#ffffff"></div>
<div class="r" style="left:525px;top:768px;width:116px;height:1px;background:#ffffff"></div>
<div class="r" style="left:525px;top:797px;width:116px;height:1px;background:#ffffff"></div>
<div class="r" style="left:641px;top:647px;width:1px;height:92px;background:#d2d2d2"></div>
<div class="r" style="left:642px;top:647px;width:1px;height:91px;background:#ffffff"></div>
<div class="r" style="left:640px;top:647px;width:1px;height:91px;background:#fafafa"></div>
<div class="r" style="left:641px;top:741px;width:1px;height:84px;background:#ffffff"></div>
<div class="r" style="left:642px;top:647px;width:140px;height:1px;background:#ffffff"></div>
<div class="r" style="left:783px;top:647px;width:1px;height:92px;background:#d2d2d2"></div>
<div class="r" style="left:784px;top:647px;width:1px;height:91px;background:#ffffff"></div>
<div class="r" style="left:782px;top:647px;width:1px;height:91px;background:#fafafa"></div>
<div class="r" style="left:783px;top:741px;width:1px;height:84px;background:#ffffff"></div>
<div class="r" style="left:784px;top:647px;width:140px;height:1px;background:#ffffff"></div>
<div class="r" style="left:784px;top:676px;width:140px;height:1px;background:#fafafa"></div>
<div class="r" style="left:784px;top:677px;width:140px;height:1px;background:#d2d2d2"></div>
<div class="r" style="left:784px;top:678px;width:140px;height:1px;background:#ffffff"></div>
<div class="r" style="left:784px;top:707px;width:140px;height:1px;background:#fafafa"></div>
<div class="r" style="left:784px;top:708px;width:140px;height:1px;background:#d2d2d2"></div>
<div class="r" style="left:784px;top:709px;width:140px;height:1px;background:#ffffff"></div>
<div class="r" style="left:784px;top:768px;width:141px;height:1px;background:#ffffff"></div>
<div class="r" style="left:784px;top:797px;width:141px;height:1px;background:#ffffff"></div>
<div class="r" style="left:925px;top:647px;width:1px;height:92px;background:#d2d2d2"></div>
<div class="r" style="left:926px;top:647px;width:1px;height:91px;background:#ffffff"></div>
<div class="r" style="left:924px;top:647px;width:1px;height:91px;background:#fafafa"></div>
<div class="r" style="left:925px;top:741px;width:1px;height:84px;background:#ffffff"></div>
<div class="r" style="left:926px;top:647px;width:140px;height:1px;background:#ffffff"></div>
<div class="r" style="left:1067px;top:647px;width:1px;height:92px;background:#d2d2d2"></div>
<div class="r" style="left:1068px;top:647px;width:1px;height:91px;background:#ffffff"></div>
<div class="r" style="left:1066px;top:647px;width:1px;height:91px;background:#fafafa"></div>
<div class="r" style="left:1067px;top:741px;width:1px;height:84px;background:#ffffff"></div>
<div class="r" style="left:1068px;top:647px;width:141px;height:1px;background:#ffffff"></div>
<div class="r" style="left:1210px;top:647px;width:1px;height:92px;background:#d2d2d2"></div>
<div class="r" style="left:1211px;top:647px;width:1px;height:91px;background:#ffffff"></div>
<div class="r" style="left:1209px;top:647px;width:1px;height:91px;background:#fafafa"></div>
<div class="r" style="left:1210px;top:741px;width:1px;height:84px;background:#ffffff"></div>
<div class="r" style="left:1211px;top:647px;width:187px;height:1px;background:#ffffff"></div>
<div class="t" style="left:144px;top:654px;font-size:13px;line-height:15px;color:#4d4d4d;font-weight:normal;letter-spacing:0.017px;">Количество</div>
<div class="t" style="left:144px;top:685px;font-size:13px;line-height:15px;color:#4d4d4d;font-weight:normal;letter-spacing:0.039px;">Увеличение</div>
<div class="t" style="left:144px;top:716px;font-size:13px;line-height:15px;color:#4d4d4d;font-weight:normal;letter-spacing:-0.113px;">Уменьшение</div>
<div class="t" style="left:292px;top:654px;font-size:13px;line-height:15px;color:#4d4d4d;font-weight:normal;letter-spacing:0.38px;">Ед.</div>
<div class="t" style="left:292px;top:670px;font-size:13px;line-height:15px;color:#4d4d4d;font-weight:normal;letter-spacing:0.059px;">изм.</div>
<div class="t" style="left:343px;top:654px;font-size:13px;line-height:15px;color:#4d4d4d;font-weight:normal;letter-spacing:-0.019px;">Всего</div>
<div class="t" style="left:343px;top:685px;font-size:13px;line-height:15px;color:#4d4d4d;font-weight:normal;letter-spacing:0.039px;">Увеличение</div>
<div class="t" style="left:343px;top:716px;font-size:13px;line-height:15px;color:#4d4d4d;font-weight:normal;letter-spacing:-0.113px;">Уменьшение</div>
<div class="t" style="left:460px;top:654px;font-size:13px;line-height:15px;color:#4d4d4d;font-weight:normal;letter-spacing:-0.091px;">Ставка</div>
<div class="t" style="left:460px;top:670px;font-size:13px;line-height:15px;color:#4d4d4d;font-weight:normal;letter-spacing:-0.193px;">НДС</div>
<div class="t" style="left:533px;top:654px;font-size:13px;line-height:15px;color:#4d4d4d;font-weight:normal;letter-spacing:-0.193px;">НДС</div>
<div class="t" style="left:533px;top:685px;font-size:13px;line-height:15px;color:#4d4d4d;font-weight:normal;letter-spacing:0.039px;">Увеличение</div>
<div class="t" style="left:533px;top:716px;font-size:13px;line-height:15px;color:#4d4d4d;font-weight:normal;letter-spacing:-0.113px;">Уменьшение</div>
<div class="t" style="left:650px;top:654px;font-size:13px;line-height:15px;color:#4d4d4d;font-weight:normal;letter-spacing:0.002px;">Номер ГТД</div>
<div class="t" style="left:792px;top:654px;font-size:13px;line-height:15px;color:#4d4d4d;font-weight:normal;letter-spacing:-0.09px;">Количество по РНПТ</div>
<div class="t" style="left:792px;top:685px;font-size:13px;line-height:15px;color:#4d4d4d;font-weight:normal;letter-spacing:0.039px;">Увеличение</div>
<div class="t" style="left:792px;top:716px;font-size:13px;line-height:15px;color:#4d4d4d;font-weight:normal;letter-spacing:-0.113px;">Уменьшение</div>
<div class="t" style="left:934px;top:654px;font-size:13px;line-height:15px;color:#4d4d4d;font-weight:normal;letter-spacing:-0.077px;">Предыдущий</div>
<div class="t" style="left:934px;top:670px;font-size:13px;line-height:15px;color:#4d4d4d;font-weight:normal;letter-spacing:-0.074px;">счет-фактура</div>
<div class="t" style="left:1076px;top:654px;font-size:13px;line-height:15px;color:#4d4d4d;font-weight:normal;letter-spacing:-0.17px;">Первичный</div>
<div class="t" style="left:1076px;top:670px;font-size:13px;line-height:15px;color:#4d4d4d;font-weight:normal;letter-spacing:-0.074px;">счет-фактура</div>
<div class="t" style="left:1218px;top:654px;font-size:13px;line-height:15px;color:#4d4d4d;font-weight:normal;letter-spacing:-0.071px;">Номер строки исходного СФ</div>
<div class="t" style="right:1181px;top:747px;font-size:13px;line-height:15px;color:#333;text-align:right;letter-spacing:-0.109px;">8,000</div>
<div class="t" style="right:1181px;top:805px;font-size:13px;line-height:15px;color:#333;text-align:right;letter-spacing:-0.109px;">2,000</div>
<div class="t" style="left:292px;top:747px;font-size:13px;line-height:15px;color:#333;font-weight:normal;letter-spacing:-0.188px;">шт</div>
<div class="t" style="right:1013px;top:747px;font-size:13px;line-height:15px;color:#333;text-align:right;letter-spacing:-0.095px;">14 400,00</div>
<div class="t" style="right:1013px;top:805px;font-size:13px;line-height:15px;color:#333;text-align:right;letter-spacing:-0.078px;">3 600,00</div>
<div class="t" style="left:460px;top:747px;font-size:13px;line-height:15px;color:#333;font-weight:normal;letter-spacing:-0.01px;">20%</div>
<div class="t" style="right:823px;top:747px;font-size:13px;line-height:15px;color:#333;text-align:right;letter-spacing:-0.078px;">2 400,00</div>
<div class="t" style="right:823px;top:805px;font-size:13px;line-height:15px;color:#333;text-align:right;letter-spacing:-0.13px;">600,00</div>
<div class="t" style="left:650px;top:747px;font-size:13px;line-height:15px;color:#333;font-weight:normal;letter-spacing:-0.14px;">22222/010120/22222</div>
<div class="t" style="right:539px;top:747px;font-size:13px;line-height:15px;color:#333;text-align:right;letter-spacing:-0.15px;">4,00000000000</div>
<div class="t" style="right:539px;top:805px;font-size:13px;line-height:15px;color:#333;text-align:right;letter-spacing:-0.15px;">1,00000000000</div>
<div class="t" style="left:934px;top:747px;font-size:13px;line-height:15px;color:#333;font-weight:normal;letter-spacing:-0.065px;">Счет-фактура</div>
<div class="t" style="left:1076px;top:747px;font-size:13px;line-height:15px;color:#333;font-weight:normal;letter-spacing:-0.065px;">Счет-фактура</div>
<div class="t" style="left:934px;top:763px;font-size:13px;line-height:15px;color:#333;font-weight:normal;letter-spacing:-0.127px;">выданный</div>
<div class="t" style="left:1076px;top:763px;font-size:13px;line-height:15px;color:#333;font-weight:normal;letter-spacing:-0.127px;">выданный</div>
<div class="t" style="left:934px;top:779px;font-size:13px;line-height:15px;color:#333;font-weight:normal;letter-spacing:-0.125px;">СБ00-0000001 от</div>
<div class="t" style="left:1076px;top:779px;font-size:13px;line-height:15px;color:#333;font-weight:normal;letter-spacing:-0.125px;">СБ00-0000001 от</div>
<div class="t" style="left:934px;top:795px;font-size:13px;line-height:15px;color:#333;font-weight:normal;letter-spacing:-0.07px;">09.07.2021 12:00:01</div>
<div class="t" style="left:1076px;top:795px;font-size:13px;line-height:15px;color:#333;font-weight:normal;letter-spacing:-0.07px;">09.07.2021 12:00:01</div>
<div class="r" style="left:1210px;top:741px;width:189px;height:84px;background:#fde38e;border:2px solid #f9c61f;box-sizing:border-box"></div>
<div class="t" style="right:65px;top:747px;font-size:13px;line-height:15px;color:#333;text-align:right;letter-spacing:-0.234px;">2</div>
<svg class="r" style="left:42px;top:850px" width="6" height="8" viewBox="0 0 6 8"><path d="M5 0.5v7L0.8 4z" fill="#555"/></svg>
<div class="r" style="left:57px;top:850px;width:1319px;height:8px;background:#d6d6d6;border-radius:4px"></div>
<div class="r" style="left:440px;top:850px;width:936px;height:8px;background:#9b9b9b;border-radius:4px"></div>
<svg class="r" style="left:1385px;top:850px" width="6" height="8" viewBox="0 0 6 8"><path d="M1 0.5v7L5.2 4z" fill="#c8c8c8"/></svg>
<div class="r" style="left:1207px;top:644px;width:197px;height:186px;border:3px solid #ff0000;box-sizing:border-box"></div>
<svg class="r" style="left:0;top:0" width="1456" height="892" viewBox="0 0 1456 892"><line x1="221" y1="484" x2="271" y2="575" stroke="#ff0000" stroke-width="3"/><path d="M274.8 583L266 577.5L275 572.5z" fill="#ff0000"/></svg>
</body></html>
